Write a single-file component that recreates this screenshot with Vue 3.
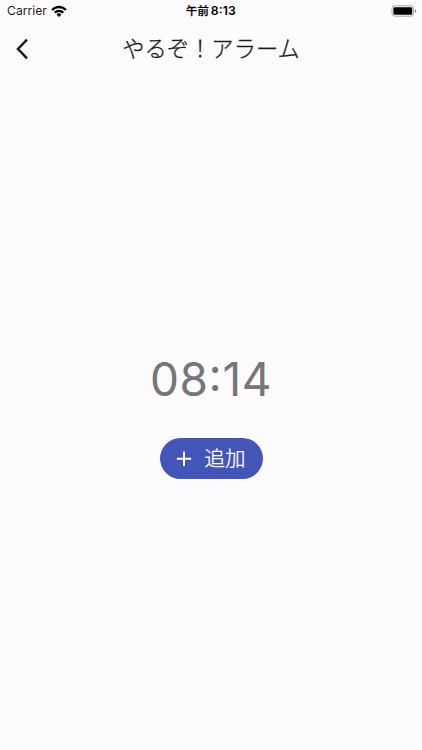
<script setup>
import { ref } from 'vue'

const title = ref('やるぞ！アラーム')
const alarmTime = ref('08:14')
</script>

<template>
  <div class="screen">
    <div class="status-bar">
      <div class="carrier">
        <span>Carrier</span>
        <svg
          class="wifi"
          viewBox="0 0 16 12"
        >
          <path d="M.3 4.200C4.600-.5 11.400-.5 15.700 4.200L14.100 5.800C10.700 2.500 5.300 2.500 1.900 5.800Z" />
          <path d="M2.900 6.800C5.800 3.900 10.200 3.900 13.100 6.800L11.400 8.500C9.500 6.700 6.500 6.700 4.600 8.500Z" />
          <path d="M5.500 9.400C6.900 8 9.100 8 10.500 9.400L8 11.900Z" />
        </svg>
      </div>
      <div class="clock">
        <span class="meridiem">午前</span>
        <span>8:13</span>
      </div>
      <div class="power">
        <svg
          class="battery"
          viewBox="0 0 26 12"
        >
          <rect
            class="battery-case"
            x="1"
            y="0.8"
            width="21.600"
            height="10.400"
            rx="2.600"
          />
          <rect
            x="2.400"
            y="2.300"
            width="18.800"
            height="7.400"
            rx="1.200"
          />
          <path
            class="battery-tip"
            d="M24 4.300C25.700 4.800 25.700 7.200 24 7.700Z"
          />
        </svg>
      </div>
    </div>

    <header class="app-bar">
      <button class="back">
        <svg viewBox="0 0 14 22">
          <path d="M12 1.700L3 11L12 20.300" />
        </svg>
      </button>
      <h1 class="title">{{ title }}</h1>
    </header>

    <main class="content">
      <div class="time">{{ alarmTime }}</div>
      <button class="add">
        <svg
          class="plus"
          viewBox="0 0 16 16"
        >
          <path d="M8 .5V15M.8 7.700H15.200" />
        </svg>
        <span>追加</span>
      </button>
    </main>
  </div>
</template>

<style>
body {
  margin: 0;
  background: #fefbff;
}
</style>

<style scoped>
.screen {
  height: 100vh;
  display: flex;
  flex-direction: column;
  overflow: hidden;
  background: #fefbff;
  color: #1b1b1f;
  font-family: Inter, "Noto Sans CJK JP", sans-serif;
}

.status-bar {
  display: grid;
  grid-template-columns: 1fr auto 1fr;
  height: 22px;
  align-items: center;
  color: #000;
  font-size: 12.2px;
  line-height: 22px;
}

.carrier {
  display: flex;
  align-items: center;
  gap: 4px;
  padding-left: 7px;
}

.carrier span {
  color: #1b1b1f;
}

.wifi {
  width: 16px;
  height: 12px;
}

.clock {
  display: flex;
  gap: 2px;
  font-weight: 600;
  letter-spacing: 0.15px;
  font-feature-settings: "calt", "case";
}

.meridiem {
  font-size: 11.3px;
  font-weight: 500;
  letter-spacing: 0;
  -webkit-text-stroke: 0.25px #000;
}

.power {
  display: flex;
  justify-content: flex-end;
  padding-right: 5px;
}

.battery {
  width: 26px;
  height: 12px;
}

.battery-case {
  fill: none;
  stroke: #a5a3a6;
}

.battery-tip {
  fill: #777;
}

button {
  border: 0;
  padding: 0;
  font-family: inherit;
}

.app-bar {
  display: grid;
  grid-template-columns: 46px 1fr 46px;
  align-items: center;
  height: 54px;
}

.back {
  display: flex;
  justify-content: center;
  padding-right: 2px;
  background: none;
}

.back svg {
  width: 14px;
  height: 22px;
}

.back path {
  fill: none;
  stroke: #1b1b1f;
  stroke-width: 2.500;
}

.title {
  margin: 0;
  font-size: 22.300px;
  font-weight: 300;
  line-height: 54px;
  text-align: center;
  white-space: nowrap;
  -webkit-text-stroke: 0.3px #1b1b1f;
}

.content {
  flex: 1;
  display: flex;
  flex-direction: column;
  align-items: center;
  padding-top: 274px;
}

/* the colon is raised to the middle of the digits */
.time {
  height: 58px;
  color: #777579;
  font-size: 46px;
  letter-spacing: 0.6px;
  line-height: 58px;
  font-feature-settings: "calt", "case";
}

.add {
  display: flex;
  align-items: center;
  gap: 13px;
  box-sizing: border-box;
  width: 103px;
  height: 41px;
  margin-top: 30px;
  padding-left: 16px;
  border-radius: 21px;
  background: #4355b9;
  color: #fff;
  font-size: 20.500px;
  font-weight: 300;
  line-height: 41px;
  -webkit-text-stroke: 0.3px #fff;
}

.plus {
  width: 16px;
  height: 16px;
}

.plus path {
  fill: none;
  stroke: #fff;
  stroke-width: 2;
}
</style>
